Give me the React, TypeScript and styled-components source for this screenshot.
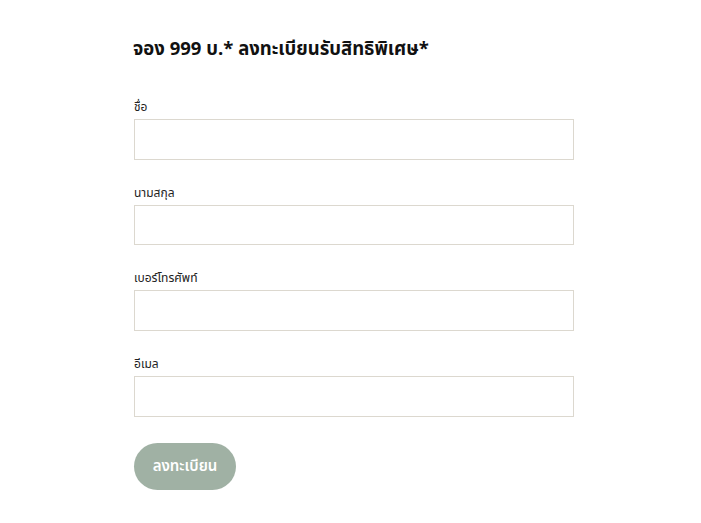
import styled, { createGlobalStyle } from "styled-components";

const GlobalStyle = createGlobalStyle`
  body {
    margin: 0;
    background: #ffffff;
    font-family: "Noto Sans Thai", "Noto Sans", "DejaVu Sans", sans-serif;
    color: #1a1a1a;
  }
`;

const Page = styled.div`
  padding: 34px 0 0 134px;
  width: 440px;
`;

const Title = styled.h2`
  margin: 0 0 34px -1px;
  font-size: 18.5px;
  font-weight: 700;
  line-height: 30px;
  color: #111;
`;

const Form = styled.form`
  display: flex;
  flex-direction: column;
  gap: 24px;
`;

const Field = styled.label`
  display: flex;
  flex-direction: column;
  gap: 3px;
`;

const LabelText = styled.span`
  font-size: 12px;
  line-height: 18px;
  color: #222;
`;

const Input = styled.input`
  box-sizing: border-box;
  width: 440px;
  height: 40.7px;
  border: 1px solid #dcd8cf;
  background: #fff;
  padding: 0 10px;
  font: inherit;
  outline: none;
`;

const SubmitButton = styled.button`
  align-self: flex-start;
  margin-top: 2px;
  width: 102px;
  height: 47px;
  border: none;
  border-radius: 24px;
  background: #a0b1a4;
  color: #fff;
  font-family: inherit;
  font-size: 15px;
  font-weight: 600;
  cursor: pointer;
`;

const fields = ["ชื่อ", "นามสกุล", "เบอร์โทรศัพท์", "อีเมล"];

export default function App() {
  return (
    <>
      <GlobalStyle />
      <Page>
        <Title>จอง 999 บ.* ลงทะเบียนรับสิทธิพิเศษ*</Title>
        <Form onSubmit={(e) => e.preventDefault()}>
          {fields.map((f) => (
            <Field key={f}>
              <LabelText>{f}</LabelText>
              <Input type="text" />
            </Field>
          ))}
          <SubmitButton type="submit">ลงทะเบียน</SubmitButton>
        </Form>
      </Page>
    </>
  );
}
